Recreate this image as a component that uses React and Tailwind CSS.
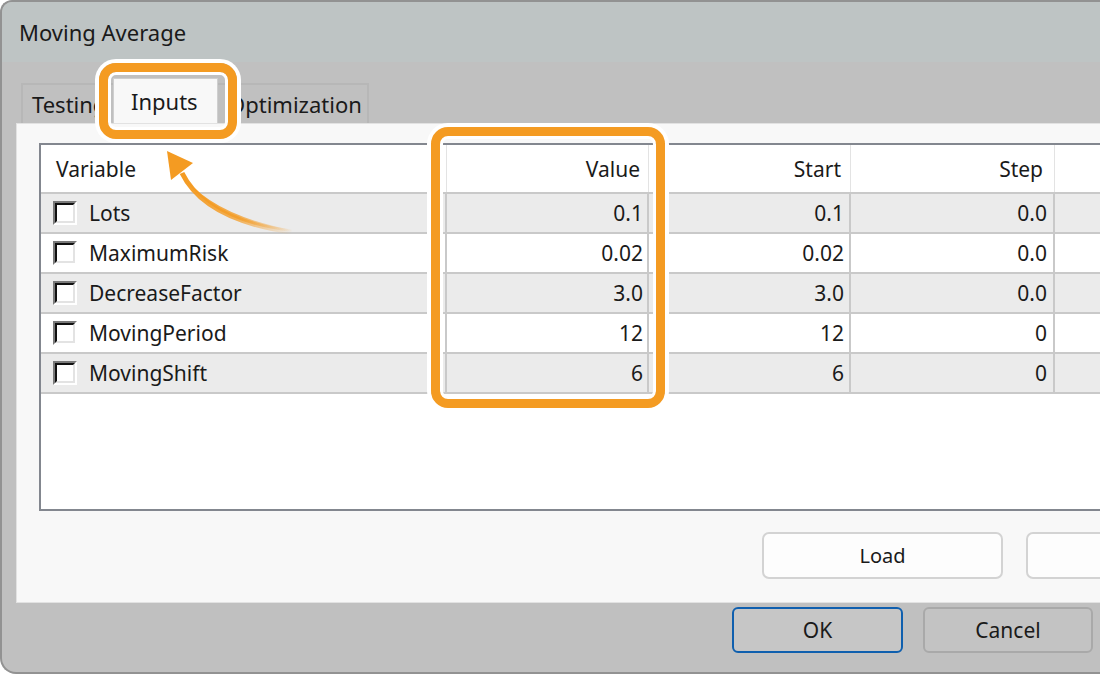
export default function App() {
  const rows = [
    ["Lots", "0.1", "0.1", "0.0"],
    ["MaximumRisk", "0.02", "0.02", "0.0"],
    ["DecreaseFactor", "3.0", "3.0", "0.0"],
    ["MovingPeriod", "12", "12", "0"],
    ["MovingShift", "6", "6", "0"],
  ];
  return (
    <div className="relative w-[1100px] h-[674px] overflow-hidden bg-white font-['Noto_Sans',sans-serif] text-[#1a1a1a]">
      <div className="w-[1306px] h-[674px] flex flex-col border-2 border-r-0 border-[#929292] rounded-tl-[12px] rounded-bl-[16px] overflow-hidden bg-[#c0c0c0]">
        <div className="h-[60px] shrink-0 bg-[#bec4c4] flex items-center pl-[17px] text-[22px] leading-none">
          Moving Average
        </div>
        <div className="h-[61px] shrink-0 flex items-end pl-[19px] text-[22px] leading-none">
          <div className="w-[94px] h-[40px] border-2 border-b-0 border-[#b7b7b7] flex items-center pl-[9px] overflow-hidden whitespace-nowrap">
            Testing
          </div>
          <div className="relative z-10 -ml-[2px] w-[105px] h-[45px] bg-[#f8f8f8] border border-b-0 border-[#cfcfcf] flex items-center pl-[17px] pb-[1px]">
            Inputs
          </div>
          <div className="-ml-[2px] w-[153px] h-[40px] border-2 border-b-0 border-[#b7b7b7] flex items-center pl-[10px] whitespace-nowrap">
            Optimization
          </div>
        </div>
        <div className="ml-[14px] h-[480px] shrink-0 bg-[#f8f8f8] border-l border-t border-b border-[#e2e2e2] flex flex-col pl-[22px] pt-[19px]">
          <div className="h-[368px] mr-[22px] border-2 border-[#83878f] bg-white flex flex-col text-[21px] leading-none">
            <div className="h-[49px] shrink-0 flex border-b-2 border-[#c9c9c9]">
              <div className="w-[406px] shrink-0 border-r border-[#e3e3e3] flex items-center pl-[15px] pt-[2px]">Variable</div>
              <div className="w-[202px] shrink-0 border-r border-[#e3e3e3] flex items-center justify-end pr-[8px] pt-[2px]">Value</div>
              <div className="w-[202px] shrink-0 border-r border-[#e3e3e3] flex items-center justify-end pr-[9px] pt-[2px]">Start</div>
              <div className="w-[204px] shrink-0 border-r border-[#e3e3e3] flex items-center justify-end pr-[11px] pt-[2px]">Step</div>
              <div className="flex-1" />
            </div>
            {rows.map((r, i) => (
              <div
                key={r[0]}
                className={`h-[40px] shrink-0 flex border-b-2 border-[#c9c9c9] ${i % 2 === 0 ? "bg-[#ebebeb]" : "bg-white"}`}
              >
                <div className="w-[406px] shrink-0 border-r-2 border-[#c9c9c9] flex items-center pl-[12px] gap-[12px]">
                  <div className="w-[24px] h-[24px] border-2 border-t-[#7a7a7a] border-l-[#7a7a7a] border-b-white border-r-white">
                    <div className="w-full h-full border-2 border-t-[#111] border-l-[#111] border-b-[#e3e3e3] border-r-[#e3e3e3] bg-white" />
                  </div>
                  <span>{r[0]}</span>
                </div>
                <div className="w-[202px] shrink-0 border-r-2 border-[#c9c9c9] flex items-center justify-end pr-[4px]">{r[1]}</div>
                <div className="w-[202px] shrink-0 border-r-2 border-[#c9c9c9] flex items-center justify-end pr-[5px]">{r[2]}</div>
                <div className="w-[204px] shrink-0 border-r-2 border-[#c9c9c9] flex items-center justify-end pr-[6px]">{r[3]}</div>
                <div className="flex-1" />
              </div>
            ))}
          </div>
          <div className="mt-[21px] flex gap-[23px] pl-[723px] text-[20px] leading-none">
            <div className="w-[241px] h-[47px] rounded-[7px] border-2 border-[#d3d3d3] bg-[#fdfdfd] flex items-center justify-center">Load</div>
            <div className="w-[241px] h-[47px] rounded-[7px] border-2 border-[#d3d3d3] bg-[#fdfdfd]" />
          </div>
        </div>
        <div className="flex-1 flex pl-[730px] pt-[4px] gap-[20px] text-[21px] leading-none">
          <div className="w-[171px] h-[46px] rounded-[6px] border-2 border-[#0f5fae] bg-[#c6c6c6] flex items-center justify-center">OK</div>
          <div className="w-[170px] h-[46px] rounded-[6px] border-2 border-[#a9a9a9] bg-[#c3c3c3] flex items-center justify-center">Cancel</div>
        </div>
      </div>

      <div className="absolute left-[99px] top-[63px] w-[138px] h-[76px] border-[9px] border-[#f49b22] rounded-[17px] shadow-[0_0_0_4px_#fff,inset_0_0_0_3px_#fff] pointer-events-none" />
      <div className="absolute left-[431px] top-[127px] w-[234px] h-[281px] border-[9px] border-[#f49b22] rounded-[17px] shadow-[0_0_0_4px_#fff,inset_0_0_0_3px_#fff] pointer-events-none" />

      <svg className="absolute left-0 top-0 pointer-events-none" width="1100" height="674" viewBox="0 0 1100 674">
        <defs>
          <linearGradient id="arrowGrad" gradientUnits="userSpaceOnUse" x1="292" y1="232" x2="185" y2="175">
            <stop offset="0" stopColor="#f49b22" stopOpacity="0" />
            <stop offset="0.45" stopColor="#f49b22" stopOpacity="0.75" />
            <stop offset="1" stopColor="#f49b22" stopOpacity="1" />
          </linearGradient>
        </defs>
        <path d="M292 232 Q208 222 181 172 Q208 214 292 230 Z" fill="url(#arrowGrad)" />
        <path d="M292 232 Q205 220 182 173" fill="none" stroke="url(#arrowGrad)" strokeWidth="5" />
        <polygon points="167,151 171,180 193,163" fill="#f49b22" />
      </svg>
    </div>
  );
}
